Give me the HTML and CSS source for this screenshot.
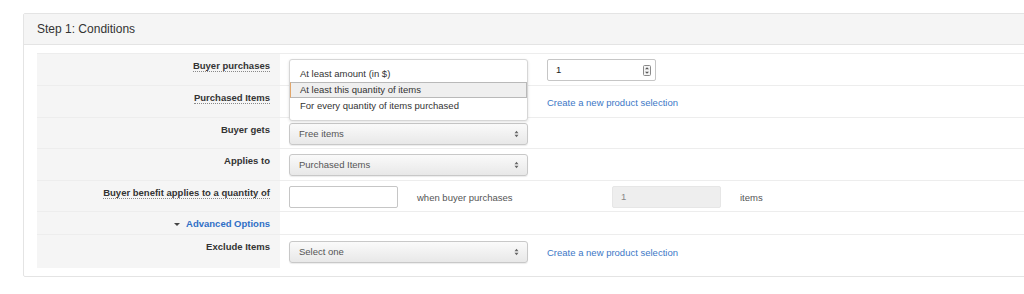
FILE: index.html
```html
<!DOCTYPE html>
<html lang="en">
<head>
  <meta charset="UTF-8">
  <title>Step 1: Conditions</title>
  <link rel="stylesheet" href="styles.css">
</head>
<body>
  <div class="panel">
    <div class="panel-heading">Step 1: Conditions</div>
    <div class="panel-body">
      <div class="form-table">

        <div class="row">
          <div class="label"><span class="hint">Buyer purchases</span></div>
          <div class="value">
            <div class="select-wrap">
              <!-- open list of the select -->
              <ul class="dropdown">
                <li>At least amount (in $)</li>
                <li class="active">At least this quantity of items</li>
                <li>For every quantity of items purchased</li>
              </ul>
            </div>
            <div class="input number">1
              <svg class="spin" width="8" height="11" viewBox="0 0 8 11">
                <rect x="0.5" y="0.5" width="7" height="10" rx="1" fill="#f4f4f4" stroke="#8a8a8a"/>
                <path d="M2 4.2 L4 2.2 L6 4.2 Z M2 6.8 L4 8.8 L6 6.8 Z" fill="#555"/>
              </svg>
            </div>
          </div>
        </div>

        <div class="row">
          <div class="label"><span class="hint">Purchased Items</span></div>
          <div class="value">
            <div class="select-wrap"></div>
            <a class="link" href="#">Create a new product selection</a>
          </div>
        </div>

        <div class="row tight">
          <div class="label">Buyer gets</div>
          <div class="value">
            <div class="select">Free items
              <svg class="arrows" width="5" height="8" viewBox="0 0 5 8"><path d="M0.5 3.2 L2.5 0.8 L4.5 3.2 Z M0.5 4.8 L2.5 7.2 L4.5 4.8 Z" fill="#666"/></svg>
            </div>
          </div>
        </div>

        <div class="row">
          <div class="label">Applies to</div>
          <div class="value">
            <div class="select">Purchased Items
              <svg class="arrows" width="5" height="8" viewBox="0 0 5 8"><path d="M0.5 3.2 L2.5 0.8 L4.5 3.2 Z M0.5 4.8 L2.5 7.2 L4.5 4.8 Z" fill="#666"/></svg>
            </div>
          </div>
        </div>

        <div class="row tight">
          <div class="label"><span class="hint">Buyer benefit applies to a quantity of</span></div>
          <div class="value">
            <div class="input"></div>
            <span class="qty-text">when buyer purchases</span>
            <div class="input disabled">1</div>
            <span class="unit">items</span>
          </div>
        </div>

        <div class="row short">
          <div class="label"><a class="advanced" href="#"><span class="caret"></span>Advanced Options</a></div>
          <div class="value"></div>
        </div>

        <div class="row last">
          <div class="label">Exclude Items</div>
          <div class="value">
            <div class="select">Select one
              <svg class="arrows" width="5" height="8" viewBox="0 0 5 8"><path d="M0.5 3.2 L2.5 0.8 L4.5 3.2 Z M0.5 4.8 L2.5 7.2 L4.5 4.8 Z" fill="#666"/></svg>
            </div>
            <a class="link" href="#">Create a new product selection</a>
          </div>
        </div>

      </div>
    </div>
  </div>
</body>
</html>
```

FILE: styles.css
```css
html, body {
  overflow: hidden;
}
body {
  margin: 13px 0 0 23px;
  font-family: "Liberation Sans", Arial, sans-serif;
  font-size: 9.5px;
  color: #333;
  background: #fff;
}
.panel {
  width: 1040px;
  border: 1px solid #e4e4e4;
  border-radius: 2px;
}
.panel-heading {
  height: 30px;
  line-height: 30px;
  padding-left: 13px;
  font-size: 12px;
  background: #f5f5f5;
  border-bottom: 1px solid #e4e4e4;
}
.panel-body {
  padding: 8px 0 8px 13px;
}
.form-table {
  border-top: 1px solid #ededed;
}
.row {
  display: flex;
  border-bottom: 1px solid #ededed;
}
.row.last {
  border-bottom: none;
}
.label {
  width: 233px;
  flex-shrink: 0;
  padding: 6px 10px 0 0;
  line-height: 11px;
  text-align: right;
  font-weight: bold;
  background: #f5f5f5;
}
.row.short .label {
  height: 16px;
}
.hint {
  border-bottom: 1px dotted #888;
}
.value {
  flex: 1;
  display: flex;
  align-items: center;
  gap: 19px;
  padding: 5px 9px 4px;
}
.row.tight .value {
  padding-bottom: 3px;
}
.row.last .value {
  padding: 6px 9px 5px;
}
.select-wrap {
  position: relative;
  width: 239px;
  height: 22px;
}
.select {
  position: relative;
  box-sizing: border-box;
  width: 239px;
  height: 22px;
  line-height: 20px;
  padding-left: 9px;
  color: #555;
  border: 1px solid #c8c8c8;
  border-radius: 3px;
  background: linear-gradient(#fafafa, #e8e8e8);
  box-shadow: 0 1px 1px rgba(0, 0, 0, 0.08);
}
.arrows {
  position: absolute;
  right: 8px;
  top: 6px;
}
.dropdown {
  position: absolute;
  z-index: 10;
  left: 0;
  top: 0;
  box-sizing: border-box;
  width: 239px;
  margin: 0;
  padding: 6px 0;
  list-style: none;
  background: #fff;
  border: 1px solid #d6d6d6;
  border-radius: 3px;
  box-shadow: 0 1px 3px rgba(0, 0, 0, 0.12);
}
.dropdown li {
  box-sizing: border-box;
  height: 16px;
  line-height: 16px;
  padding-left: 10px;
}
.dropdown li.active {
  line-height: 14px;
  background: #efefef;
  border: 1px solid #b9b9b9;
  border-left-color: #e2a66a;
  padding-left: 9px;
}
.input {
  position: relative;
  box-sizing: border-box;
  width: 109px;
  height: 22px;
  line-height: 20px;
  padding-left: 8px;
  border: 1px solid #c6c6c6;
  border-radius: 2px;
  background: #fff;
}
.number {
  color: #222;
}
.spin {
  position: absolute;
  right: 4px;
  top: 5px;
}
.disabled {
  color: #888;
  background: #eeeeee;
  border-color: #e6e6e6;
}
.qty-text {
  width: 176px;
  color: #555;
}
.unit {
  color: #555;
}
.link {
  color: #3d77c6;
  text-decoration: none;
}
.advanced {
  color: #2f6fc6;
  text-decoration: none;
}
.caret {
  display: inline-block;
  width: 0;
  height: 0;
  margin: 0 6px 1px 0;
  border-left: 3px solid transparent;
  border-right: 3px solid transparent;
  border-top: 3px solid #444;
}
```
